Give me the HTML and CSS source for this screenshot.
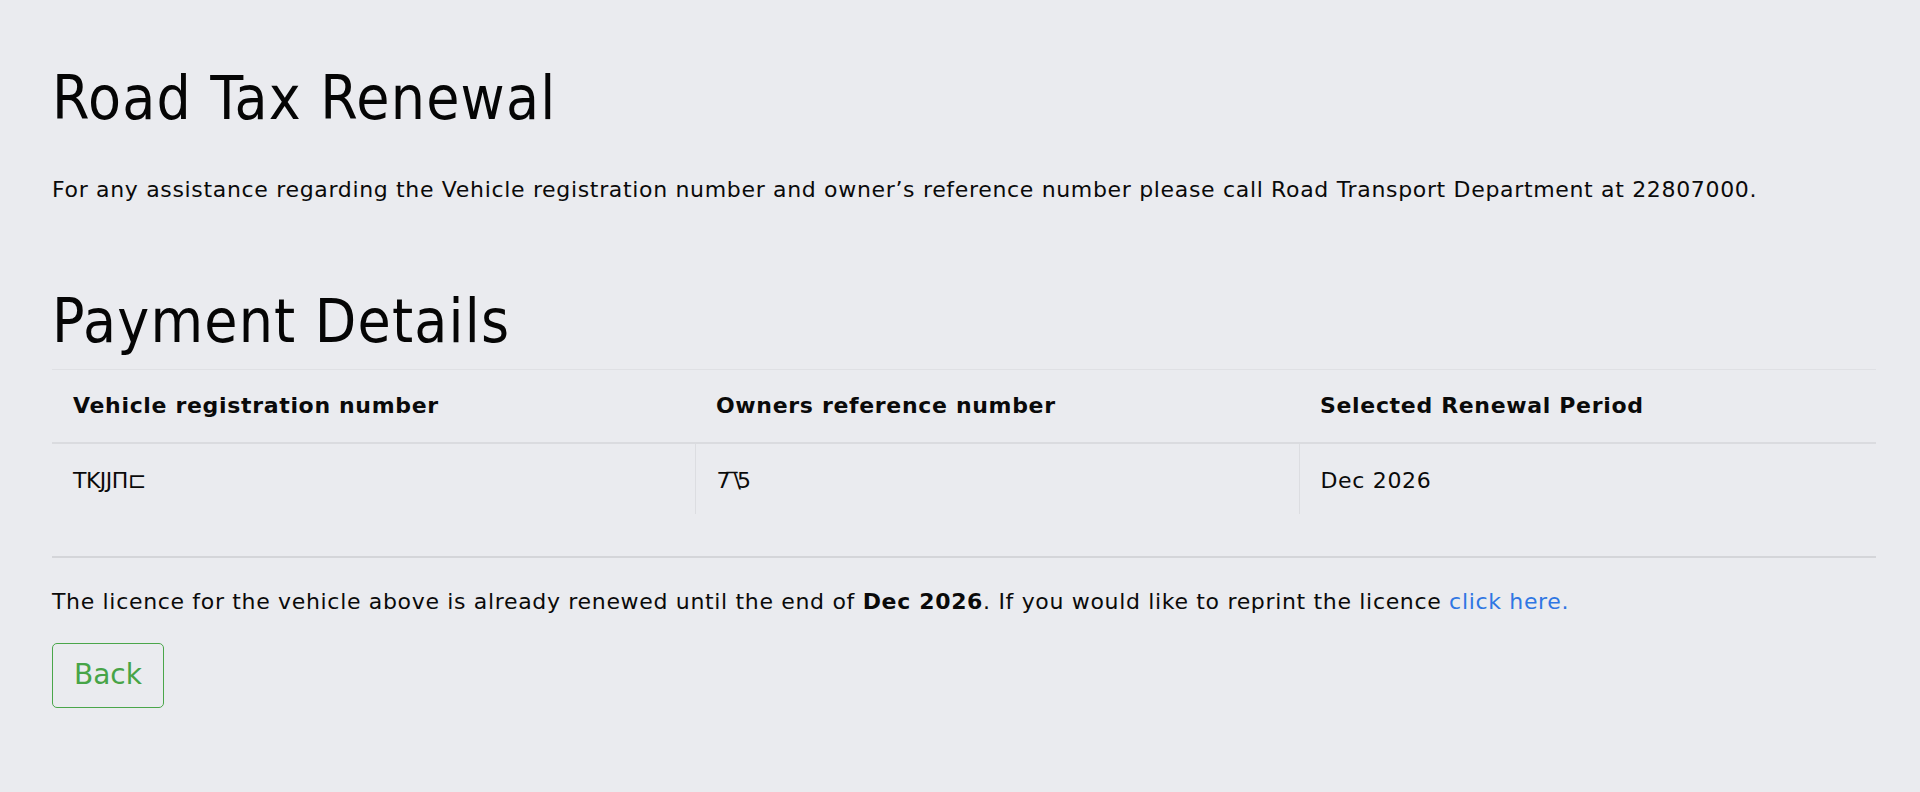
FILE: index.html
```html
<!DOCTYPE html>
<html lang="en">
<head>
<meta charset="utf-8">
<title>Road Tax Renewal</title>
<link rel="stylesheet" href="styles.css">
</head>
<body>
<main class="page">
  <h1 class="title">Road Tax Renewal</h1>
  <p class="intro">For any assistance regarding the Vehicle registration number and owner’s reference number please call Road Transport Department at 22807000.</p>

  <h2 class="title section-title">Payment Details</h2>
  <table class="details">
    <colgroup>
      <col class="col-a">
      <col class="col-b">
      <col class="col-c">
    </colgroup>
    <thead>
      <tr>
        <th>Vehicle registration number</th>
        <th>Owners reference number</th>
        <th>Selected Renewal Period</th>
      </tr>
    </thead>
    <tbody>
      <tr>
        <td><span class="masked">TKJJΠ⊏</span></td>
        <td><span class="masked masked-short">7‾\5</span></td>
        <td>Dec 2026</td>
      </tr>
    </tbody>
  </table>

  <hr class="rule">

  <p class="notice">The licence for the vehicle above is already renewed until the end of <strong>Dec 2026</strong>. If you would like to reprint the licence <a class="link" href="#">click here.</a></p>

  <button class="btn-back" type="button">Back</button>
</main>
</body>
</html>
```

FILE: styles.css
```css
html, body {
  margin: 0;
  padding: 0;
}

body {
  background: #eaebef;
  color: #0a0a0a;
  font-family: "DejaVu Sans", sans-serif;
  font-size: 22px;
  line-height: 1.5;
  letter-spacing: 0.67px;
}

.page {
  padding: 62px 44px 40px 52px;
}

.title {
  margin: 0;
  font-family: "DejaVu Sans Condensed", "DejaVu Sans", sans-serif;
  font-size: 60px;
  font-weight: normal;
  line-height: 72px;
  letter-spacing: 1.2px;
  color: #050505;
}

.intro {
  margin: 39px 0 0;
}

.section-title {
  margin-top: 79px;
}

.details {
  width: 100%;
  margin-top: 12px;
  border-collapse: collapse;
  table-layout: fixed;
  border-top: 1px solid #dfe0e4;
}

.col-a { width: 643px; }
.col-b { width: 604px; }
.col-c { width: auto; }

.details th {
  text-align: left;
  font-weight: bold;
  padding: 19px 21px 20px;
  border-bottom: 2px solid #dadbdf;
}

.details td {
  padding: 20px 21px 17px;
}

.details td + td {
  border-left: 1px solid #dcdde1;
}

.masked {
  letter-spacing: -0.5px;
}

.masked-short {
  letter-spacing: -4px;
}

.rule {
  margin: 42px 0 0;
  border: 0;
  border-top: 2px solid #d4d5d9;
  height: 0;
}

.notice {
  margin: 27px 0 0;
}

.notice strong {
  font-weight: bold;
}

.link {
  color: #2f76e3;
  text-decoration: none;
}

.btn-back {
  display: block;
  margin-top: 25px;
  padding: 10px 21px 11px;
  font-family: inherit;
  font-size: 28px;
  line-height: 42px;
  letter-spacing: 0;
  color: #47a447;
  background: transparent;
  border: 1.5px solid #4aa64a;
  border-radius: 5px;
}
```
